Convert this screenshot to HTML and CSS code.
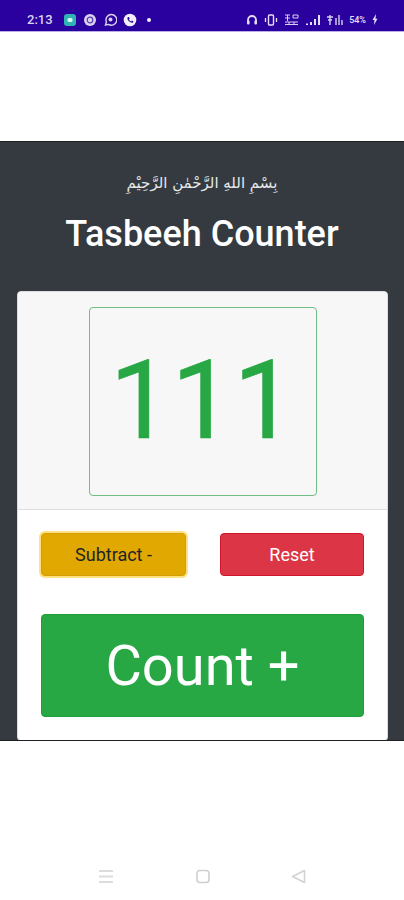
FILE: index.html
```html
<!DOCTYPE html>
<html lang="en">
<head>
<meta charset="utf-8">
<title>Tasbeeh Counter</title>
<link rel="stylesheet" href="styles.css">
</head>
<body>
<div class="status">
  <div class="status-group">
    <span class="time">2:13</span>
    <svg class="ic" width="14" height="14" viewBox="0 0 14 14"><rect x="1" y="1" width="12" height="12" rx="3" fill="#2fb3b5"/><rect x="4.5" y="5" width="5" height="4" rx="1.5" fill="#d8f4ef"/></svg>
    <svg class="ic" width="14" height="14" viewBox="0 0 14 14"><circle cx="7" cy="7" r="6" fill="#d9d3ee"/><circle cx="7" cy="7" r="2.8" fill="none" stroke="#5a3ab0" stroke-width="1.2"/></svg>
    <svg class="ic" width="14" height="14" viewBox="0 0 14 14"><path d="M2.5 12 L3.4 9 A5.4 5.4 0 1 1 5.4 11.4 Z" fill="none" stroke="#d9d3ee" stroke-width="1.4"/><circle cx="7.5" cy="6.5" r="2" fill="#d9d3ee"/></svg>
    <svg class="ic" width="14" height="14" viewBox="0 0 14 14"><circle cx="7" cy="7" r="6.3" fill="#f2effa"/><path d="M4.6 4.2 L6 4 L6.7 5.8 L5.9 6.6 Q6.7 8 8.2 8.5 L9 7.6 L10.4 8.4 L10 9.8 Q6.5 10.2 4.4 6 Z" fill="#2a0a9c"/></svg>
    <span class="dot"></span>
  </div>
  <div class="status-group right">
    <svg width="12" height="12" viewBox="0 0 12 12"><path d="M2 9 V6 A4 4 0 0 1 10 6 V9" fill="none" stroke="#e4e0f4" stroke-width="1.8"/><rect x="1" y="6.5" width="2.6" height="4" rx="1" fill="#e4e0f4"/><rect x="8.4" y="6.5" width="2.6" height="4" rx="1" fill="#e4e0f4"/></svg>
    <svg width="14" height="12" viewBox="0 0 14 12"><rect x="4.5" y="1" width="5" height="10" rx="1" fill="none" stroke="#e4e0f4" stroke-width="1.4"/><path d="M1.5 4 V8 M12.5 4 V8" stroke="#e4e0f4" stroke-width="1.3"/></svg>
    <svg width="15" height="13" viewBox="0 0 15 13"><path d="M1 2 H6 M1 5 H6 M3.5 2 V8 M9 2 H14 V5 H9 Z M1 9 H14 M1 11.5 H14 M5 9 V12 M10 9 V12" fill="none" stroke="#d6d1ee" stroke-width="1"/></svg>
    <svg width="15" height="11" viewBox="0 0 15 11"><path d="M1 9.5 H3 V11 H1 Z M5 8 H7 V11 H5 Z M9 5 H11 V11 H9 Z M13 1 H15 V11 H13 Z" fill="#e4e0f4"/></svg>
    <svg width="17" height="12" viewBox="0 0 17 12"><path d="M4 1 V11 M1 3 H7 M2 6 H6 M10 4 V11 M13 1 V11 M16 6 V11" fill="none" stroke="#d6d1ee" stroke-width="1.4"/></svg>
    <span class="battery">54%</span>
    <svg width="6" height="11" viewBox="0 0 6 11"><path d="M4 0 L0.5 6 H2.5 L2 11 L5.5 4.8 H3.5 Z" fill="#e4e0f4"/></svg>
  </div>
</div>

<div class="gap-top"></div>

<main class="app">
  <p class="bismillah" lang="ar" dir="rtl">بِسْمِ اللهِ الرَّحْمٰنِ الرَّحِيْمِ</p>
  <h1 class="title">Tasbeeh Counter</h1>
  <section class="card">
    <div class="card-header">
      <div class="display">111</div>
    </div>
    <div class="card-body">
      <div class="btn-row">
        <button class="btn btn-warning">Subtract -</button>
        <button class="btn btn-danger">Reset</button>
      </div>
      <button class="btn btn-success">Count +</button>
    </div>
  </section>
</main>

<div class="gap-bottom">
  <nav class="navbar">
    <svg width="16" height="15" viewBox="0 0 16 15"><path d="M1 2 H15 M1 7.5 H15 M1 13 H15" stroke="#dcdcdc" stroke-width="2"/></svg>
    <svg width="14" height="15" viewBox="0 0 14 15"><rect x="1" y="1.5" width="12" height="12" rx="3" fill="none" stroke="#cfcfcf" stroke-width="1.6"/></svg>
    <svg width="15" height="15" viewBox="0 0 15 15"><path d="M13.5 1.5 V13.5 L1.5 7.5 Z" fill="none" stroke="#d2d2d2" stroke-width="1.5" stroke-linejoin="round"/></svg>
  </nav>
</div>
</body>
</html>
```
FILE: styles.css
```css
* { box-sizing: border-box; }
html, body { margin: 0; padding: 0; }
body {
  width: 404px;
  height: 900px;
  overflow: hidden;
  background: #fff;
  display: flex;
  flex-direction: column;
  font-family: Roboto, sans-serif;
}
.status {
  height: 32px;
  background: #2a009f;
  border-bottom: 1px solid #b9aee6;
  display: flex;
  justify-content: space-between;
  align-items: center;
  padding: 8px 26px 0 27px;
  flex: none;
}
.status-group { display: flex; align-items: center; gap: 6px; }
.time { font-size: 13px; font-weight: 500; color: #d9d4f0; margin-right: 4px; }
.dot { width: 4px; height: 4px; border-radius: 50%; background: #f2effa; margin-left: 4px; }
.battery { font-size: 9px; font-weight: 500; color: #e4e0f4; }
.gap-top { height: 109px; flex: none; }
.app {
  height: 600px;
  flex: none;
  background: #343a40;
  border-top: 1px solid #1e2124;
  border-bottom: 1px solid #1e2124;
  padding: 0 16px;
  display: flex;
  flex-direction: column;
  align-items: stretch;
  overflow: hidden;
}
.bismillah {
  margin: 29px 0 0;
  height: 24px;
  line-height: 24px;
  text-align: center;
  font-family: "DejaVu Sans", sans-serif;
  font-size: 15px;
  color: #e6e8ea;
}
.title {
  margin: 18px 0 0;
  height: 42px;
  line-height: 42px;
  text-align: center;
  font-size: 36px;
  font-weight: 500;
  color: #fff;
}
.card {
  margin: 36px 0 0 1px;
  width: 371px;
  height: 450px;
  flex: none;
  background: #fff;
  border: 1px solid #dcdcdc;
  border-radius: 4px;
  overflow: hidden;
}
.card-header {
  height: 218px;
  background: #f7f7f7;
  border-bottom: 1px solid #dfdfdf;
  padding-top: 15px;
  display: flex;
  justify-content: center;
  align-items: flex-start;
}
.display {
  width: 228px;
  height: 189px;
  border: 1px solid #70bd85;
  border-radius: 4px;
  padding-bottom: 3px;
  display: flex;
  align-items: center;
  justify-content: center;
  font-size: 110px;
  color: #28a745;
  -webkit-text-stroke: 0.6px #28a745;
}
.card-body { padding: 23px 23px 0 23px; }
.btn-row { display: flex; justify-content: space-between; }
.btn {
  font-family: Roboto, sans-serif;
  border-radius: 4px;
  padding: 0;
  display: block;
}
.btn-row .btn { height: 43px; font-size: 18px; }
.btn-warning {
  width: 145px;
  background: #e0a800;
  border: 1px solid #d39e00;
  color: #212529;
  box-shadow: 0 0 0 2px #ffe083;
}
.btn-danger {
  width: 144px;
  background: #dc3545;
  border: 1px solid #d0162b;
  color: #fff;
}
.btn-success {
  width: 323px;
  height: 103px;
  margin-top: 38px;
  background: #28a745;
  border: 1px solid #1e9e3b;
  color: #fff;
  font-size: 56px;
}
.gap-bottom {
  flex: 1;
  display: flex;
  flex-direction: column;
  justify-content: flex-end;
}
.navbar {
  height: 46px;
  padding: 15px 98px 16px;
  display: flex;
  justify-content: space-between;
  align-items: center;
}
```
